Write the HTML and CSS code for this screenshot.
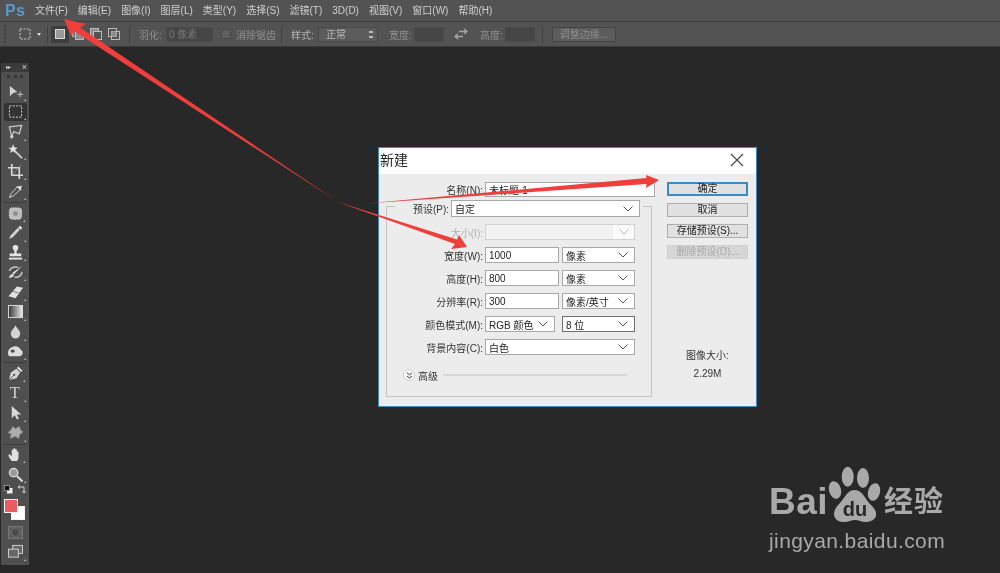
FILE: index.html
```html
<!DOCTYPE html>
<html lang="zh">
<head>
<meta charset="utf-8">
<title>Photoshop 新建</title>
<link rel="stylesheet" href="styles.css">
</head>
<body>
<svg class="defs" aria-hidden="true"><symbol id="chev" viewBox="0 0 12 8"><path d="M1.500 1.500 6 6l4.500-4.500" fill="none" stroke="currentColor" stroke-width="1"/></symbol></svg>
<div class="app">
  <header class="menubar">
    <span class="logo">Ps</span>
    <nav class="menu">
      <span>文件(F)</span><span>编辑(E)</span><span>图像(I)</span><span>图层(L)</span><span>类型(Y)</span><span>选择(S)</span><span>滤镜(T)</span><span>3D(D)</span><span>视图(V)</span><span>窗口(W)</span><span>帮助(H)</span>
    </nav>
  </header>
  <div class="options">
    <span class="grip"></span>
    <svg class="opt-marquee" width="12" height="12" viewBox="0 0 12 12"><rect x="1" y="1" width="10" height="10" fill="none" stroke="#cfcfcf" stroke-dasharray="2 1.400"/></svg>
    <span class="caret"></span>
    <span class="sep sep-a"></span>
    <span class="modes">
      <span class="mode on"><svg width="10" height="10" viewBox="0 0 10 10"><rect x=".5" y=".5" width="9" height="9" fill="#9a9a9a" stroke="#d8d8d8"/></svg></span>
      <span class="mode"><svg width="12" height="12" viewBox="0 0 12 12"><rect x=".5" y=".5" width="8" height="8" fill="#777" stroke="#aaa"/><rect x="3.500" y="3.500" width="8" height="8" fill="#8d8d8d" stroke="#bbb"/></svg></span>
      <span class="mode"><svg width="12" height="12" viewBox="0 0 12 12"><rect x=".5" y=".5" width="8" height="8" fill="#8d8d8d" stroke="#bbb"/><rect x="3.500" y="3.500" width="8" height="8" fill="#535353" stroke="#bbb"/></svg></span>
      <span class="mode"><svg width="12" height="12" viewBox="0 0 12 12"><rect x=".5" y=".5" width="8" height="8" fill="none" stroke="#bbb"/><rect x="3.500" y="3.500" width="8" height="8" fill="none" stroke="#bbb"/><rect x="3.500" y="3.500" width="5" height="5" fill="#8d8d8d"/></svg></span>
    </span>
    <span class="sep sep-b"></span>
    <span class="dim feather-label">羽化:</span>
    <span class="opt-input feather">0 像素</span>
    <span class="check"></span>
    <span class="dim aa-label">消除锯齿</span>
    <span class="sep sep-c"></span>
    <span class="lab style-label">样式:</span>
    <span class="opt-select">正常<i class="updown"></i></span>
    <span class="dim w-label">宽度:</span>
    <span class="opt-input size"></span>
    <svg class="swap" width="14" height="12" viewBox="0 0 14 12"><path d="M1 8.500h8M4 6 1 8.500 4 11M13 3.500H5M10 1l3 2.500L10 6" fill="none" stroke="#a5a5a5" stroke-width="1.300"/></svg>
    <span class="dim h-label">高度:</span>
    <span class="opt-input size"></span>
    <span class="sep sep-d"></span>
    <span class="opt-btn">调整边缘...</span>
  </div>
</div>

<aside class="toolbar">
  <div class="tb-head"><span>&#9656;&#9656;</span><span class="tb-x">×</span></div>
  <div class="tb-grip"></div>
  <div class="tool"><svg viewBox="0 0 16 16"><path d="M2 2v11l3.500-3.500L10 8.500z" fill="#d4d4d4"/><path d="M10 11h6M13 8v6" stroke="#c8c8c8" fill="none"/></svg></div>
  <div class="tool active"><svg viewBox="0 0 16 16"><rect x="1.500" y="2" width="13" height="12" fill="none" stroke="#d8d8d8" stroke-dasharray="2.200 1.400"/></svg></div>
  <div class="tool"><svg viewBox="0 0 16 16"><path d="M1.500 3l13-1.500-2.500 9-6-2.500-2 6z" fill="none" stroke="#cfcfcf" stroke-width="1.300"/><circle cx="4" cy="13.500" r="1.800" fill="#cfcfcf"/></svg></div>
  <div class="tool"><svg viewBox="0 0 16 16"><path d="M7 7l8 8" stroke="#d2d2d2" stroke-width="1.800"/><path d="M5.500 0l1.200 3.500L10 4 7.500 6.500l.5 3-2.800-1.800-3 1.800 1-3.200L.5 4H4z" fill="#e2e2e2"/></svg></div>
  <div class="tool"><svg viewBox="0 0 16 16"><path d="M4 0v12h12M0 4h12v12" fill="none" stroke="#d8d8d8" stroke-width="1.800"/><path d="M14 1 3 13" stroke="#aaa" stroke-width=".7"/></svg></div>
  <div class="tool"><svg viewBox="0 0 16 16"><path d="M10 3 3.500 10 1.500 14.500l4.500-2L13 6z" fill="none" stroke="#d8d8d8"/><path d="M9 2.500l4.500 4.500 1-1-1-1.500 1.500-1.500-1.500-1.500-1.500 1.500-1.500-1z" fill="#e8e8e8"/></svg></div>
  <div class="tool gap-top"><svg viewBox="0 0 16 16"><rect x="1.500" y="2" width="13" height="12" rx="3" fill="#bdbdbd" stroke="#e0e0e0" stroke-dasharray="1.800 1"/><circle cx="8" cy="8" r="2.500" fill="#8a8a8a"/></svg></div>
  <div class="tool"><svg viewBox="0 0 16 16"><path d="M10.500 3 3 11 1 15l4-2 7.500-8z" fill="#d4d4d4"/><path d="M11 2.500 12.800.8l2.400 2.400L13.500 5z" fill="#eee"/></svg></div>
  <div class="tool"><svg viewBox="0 0 16 16"><circle cx="8" cy="3" r="3" fill="#e4e4e4"/><path d="M6.800 5h2.400v4h5v3H1.800V9h5z" fill="#e4e4e4"/><rect x="1" y="13.500" width="14" height="2" fill="#e4e4e4"/></svg></div>
  <div class="tool"><svg viewBox="0 0 16 16"><path d="M15 1 6 10 4.500 8.500z" fill="#e8e8e8"/><path d="M5 9.500c-2 0-3.500 1.500-4 4 2.500.5 5-.5 5.500-3z" fill="#d8d8d8"/><path d="M1.500 6.500C3 2.500 7 1.500 11 2.500M15 7.500c-1 4-4 6-8 5.500" fill="none" stroke="#c8c8c8" stroke-width="1.500"/></svg></div>
  <div class="tool"><svg viewBox="0 0 16 16"><path d="M9.500 1.500 16 3 8 14 .5 12z" fill="#e0e0e0"/><path d="M5 6.500 11.500 8.500" stroke="#777"/></svg></div>
  <div class="tool"><svg viewBox="0 0 16 16"><defs><linearGradient id="gr"><stop offset="0" stop-color="#333"/><stop offset="1" stop-color="#eee"/></linearGradient></defs><rect x=".5" y="1.500" width="15" height="13" fill="url(#gr)" stroke="#ddd"/></svg></div>
  <div class="tool"><svg viewBox="0 0 16 16"><path d="M8 1c1 3.500 5 5.500 5 9.500a5 5 0 0 1-10 0C3 6.500 7 4.500 8 1z" fill="#d4d4d4"/></svg></div>
  <div class="tool"><svg viewBox="0 0 16 16"><path d="M0 10C0 5 4 2.500 8.500 2.500c3 0 4.500 3 7 5.500.5 2.500-.5 5-3.500 5H2.500C1 13 0 12 0 10z" fill="#dcdcdc"/><ellipse cx="5" cy="7.500" rx="2.300" ry="1.700" fill="#4e4e4e"/></svg></div>
  <div class="tool gap-top"><svg viewBox="0 0 16 16"><path d="M1 15 3 7l6-4 4 4-4 6z" fill="#d4d4d4"/><path d="M9.500 2l1.500-1.500 4.500 4.500-1.500 1.500z" fill="#e4e4e4"/><path d="M1 15l4.500-4.500" stroke="#4e4e4e"/><circle cx="6.500" cy="9.500" r="1.200" fill="#4e4e4e"/></svg></div>
  <div class="tool"><span class="tool-t">T</span></div>
  <div class="tool"><svg viewBox="0 0 16 16"><path d="M4 1v13l3.200-3.200 2.300 4.700 2.200-1-2.300-4.500H14z" fill="#d8d8d8"/></svg></div>
  <div class="tool"><svg viewBox="0 0 16 16"><path d="M5 1.500l3 2.500 4-2.500 1.500 4 2.500 2-3.500 2.500-1 4.500-4-2.500-5 2.500 1-5L0 8l3.500-3z" fill="#adadad" stroke="#8a8a8a"/></svg></div>
  <div class="tool gap-top"><svg viewBox="0 0 16 16"><path d="M4 15c-1-2-3.500-4-3.500-6.500 0-1.200 1.700-1.200 2.300 0L4 10V3.500c0-1.200 1.800-1.200 1.800 0V7V2c0-1.200 1.800-1.200 1.800 0v5V3c0-1.200 1.800-1.200 1.800 0v4.500V5.500c0-1.200 1.800-1.200 1.800 0V11c0 2-1 3-1.500 4z" fill="#e0e0e0"/></svg></div>
  <div class="tool"><svg viewBox="0 0 16 16"><circle cx="6" cy="6" r="4.500" fill="#9c9c9c" stroke="#dcdcdc" stroke-width="1.400"/><path d="M9.500 9.500 15.500 15.500" stroke="#dcdcdc" stroke-width="2.200"/></svg></div>
  <div class="mini">
    <svg width="9" height="9" viewBox="0 0 9 9"><rect x="3" y="3" width="5.500" height="5.500" fill="#eee"/><rect x=".5" y=".5" width="5" height="5" fill="#111" stroke="#bbb" stroke-width=".6"/></svg>
    <svg width="9" height="9" viewBox="0 0 9 9"><path d="M1 2h6v6M1 2l2-1.500M1 2l2 1.500M7 8 5.500 6M7 8l1.500-2" fill="none" stroke="#cfcfcf"/></svg>
  </div>
  <div class="swatches"><span class="sw-bg"></span><span class="sw-fg"></span></div>
  <div class="tool plain quick"><svg viewBox="0 0 16 16"><rect x=".5" y="1.500" width="15" height="13" fill="#626262" stroke="#777"/><circle cx="8" cy="8" r="3.500" fill="#4a4a4a"/><path d="M4 4.500 3 3.500M12 4.500l1-1M4 11.500l-1 1M12 11.500l1 1" stroke="#333"/></svg></div>
  <div class="tool"><svg viewBox="0 0 16 16"><rect x="5" y="1.500" width="10.500" height="8.500" fill="#666" stroke="#d4d4d4"/><rect x=".5" y="5.500" width="10.500" height="8.500" fill="#666" stroke="#d4d4d4"/></svg></div>
</aside>

<section class="dialog">
  <div class="dlg-title"><span>新建</span>
    <svg width="14" height="14" viewBox="0 0 14 14"><path d="M1 1l12 12M13 1 1 13" stroke="#444" stroke-width="1.100"/></svg>
  </div>
  <div class="dlg-body">
    <div class="dlg-form">
      <div class="row name-row"><label class="label">名称(N):</label><span class="field grow">未标题-1</span></div>
      <div class="group">
        <div class="row preset-row"><label class="label preset-label">预设(P):</label><span class="field select preset">自定<svg class="chev"><use href="#chev"/></svg></span></div>
        <div class="row"><label class="label off">大小(I):</label><span class="field select disabled w150"><i class="dis-thumb"><svg class="chev"><use href="#chev"/></svg></i></span></div>
        <div class="row"><label class="label">宽度(W):</label><span class="field num">1000</span><span class="field select unit">像素<svg class="chev"><use href="#chev"/></svg></span></div>
        <div class="row"><label class="label">高度(H):</label><span class="field num">800</span><span class="field select unit">像素<svg class="chev"><use href="#chev"/></svg></span></div>
        <div class="row"><label class="label">分辨率(R):</label><span class="field num">300</span><span class="field select unit">像素/英寸<svg class="chev"><use href="#chev"/></svg></span></div>
        <div class="row"><label class="label">颜色模式(M):</label><span class="field select mode-sel">RGB 颜色<svg class="chev"><use href="#chev"/></svg></span><span class="field select unit focus">8 位<svg class="chev"><use href="#chev"/></svg></span></div>
        <div class="row"><label class="label">背景内容(C):</label><span class="field select w150">白色<svg class="chev"><use href="#chev"/></svg></span></div>
        <div class="advanced"><span class="adv-btn"><svg width="7" height="7" viewBox="0 0 7 7"><path d="M1 .8l2.500 2 2.500-2M1 4l2.500 2L6 4" fill="none" stroke="#333"/></svg></span><span>高级</span><i></i></div>
      </div>
    </div>
    <div class="dlg-side">
      <button class="btn primary">确定</button>
      <button class="btn">取消</button>
      <button class="btn">存储预设(S)...</button>
      <button class="btn off">删除预设(D)...</button>
      <div class="info"><span>图像大小:</span><span>2.29M</span></div>
    </div>
  </div>
</section>

<div class="watermark">
  <div class="wm-top">
    <span class="wm-bai">Bai</span>
    <svg class="wm-paw" width="60" height="60" viewBox="0 0 60 60">
      <g fill="#a9a9a9">
        <ellipse cx="22.700" cy="11.700" rx="6" ry="10"/><ellipse cx="38" cy="13" rx="6" ry="10"/>
        <ellipse cx="10" cy="25" rx="6" ry="9" transform="rotate(-15 10 25)"/><ellipse cx="49" cy="27" rx="6" ry="9" transform="rotate(15 49 27)"/>
        <path d="M30 25C22 25 20 33 14 39 6 47 8 56 18 57c5 .5 8-2 12-2s7 2.500 12 2c10-1 12-9 5-16-7-6-9-16-17-16z"/>
      </g>
      <text x="30" y="51" class="wm-du">du</text>
    </svg>
    <span class="wm-cn">经验</span>
  </div>
  <div class="wm-url">jingyan.baidu.com</div>
</div>

<svg class="arrows" width="1000" height="573" viewBox="0 0 1000 573" aria-hidden="true">
  <g fill="#ee3f3d">
    <path d="M64 19 86 24 80 27.500 336 200.500 74 31 71 36z"/>
    <path d="M659 180 646 175 646.500 178 366 203.500 646.500 184 646 188z"/>
    <path d="M467 247 459 235 457 239.500 336 201.500 455 244 451 249z"/>
  </g>
</svg>
</body>
</html>
```
FILE: styles.css
```css
* { box-sizing: border-box; }
html, body { margin: 0; height: 573px; overflow: hidden; }
body {
  position: relative;
  background: #282828;
  font-family: "Liberation Sans", "Noto Sans CJK SC", sans-serif;
  font-size: 10px;
}
.defs { position: absolute; width: 0; height: 0; }
.app { filter: blur(.3px); }

.menubar {
  display: flex;
  align-items: center;
  height: 22px;
  background: #535353;
  border-bottom: 1px solid #3c3c3c;
}
.logo { width: 35px; padding-left: 5px; font-size: 16px; font-weight: 700; color: #5a97cc; letter-spacing: .3px; }
.menu { display: flex; align-items: baseline; gap: 10px; color: #d0d0d0; font-size: 10px; line-height: 14px; white-space: nowrap; }

.options {
  display: flex;
  align-items: center;
  height: 25px;
  padding-left: 4px;
  background: #535353;
  border-bottom: 1px solid #3a3a3a;
  color: #a6a6a6;
}
.grip { width: 3px; height: 18px; border-left: 2px dotted #3c3c3c; }
.opt-marquee { margin-left: 12px; }
.caret { margin-left: 6px; border: 2.500px solid transparent; border-top: 3px solid #ddd; border-bottom: 0; }
.sep { width: 1px; height: 17px; background: #3f3f3f; }
.sep-a { margin-left: 6px; }
.modes { display: flex; align-items: center; margin-left: 3px; }
.mode { display: flex; align-items: center; justify-content: center; width: 18px; height: 17px; }
.mode.on { background: #3e3e3e; border-radius: 1px; }
.sep-b { margin-left: 6px; }
.dim { color: #8f8f8f; }
.lab { color: #b5b5b5; }
.feather-label { margin-left: 9px; width: 27px; }
.opt-input { height: 15px; background: #464646; border: 1px solid #4a4a4a; color: #777; line-height: 13px; padding-left: 2px; }
.feather { width: 47px; }
.check { margin-left: 8px; width: 10px; height: 10px; background: #5f5f5f; border: 1px solid #474747; border-radius: 1px; }
.aa-label { margin-left: 5px; width: 40px; }
.sep-c { margin-left: 5px; }
.style-label { margin-left: 9px; width: 27px; }
.opt-select { position: relative; width: 60px; height: 15px; padding-left: 7px; line-height: 14px; background: #5c5c5c; border: 1px solid #484848; border-radius: 2px; color: #b8b8b8; }
.updown { position: absolute; right: 4px; top: 3px; width: 4px; height: 7px; border-top: 2px dotted #bbb; border-bottom: 2px dotted #bbb; }
.w-label { margin-left: 11px; width: 25px; }
.size { width: 30px; }
.swap { margin-left: 10px; }
.h-label { margin-left: 12px; width: 25px; }
.sep-d { margin-left: 7px; }
.opt-btn { margin-left: 9px; width: 64px; height: 15px; text-align: center; line-height: 13px; background: #5c5c5c; border: 1px solid #444; border-radius: 2px; color: #8f8f8f; }

.toolbar {
  position: absolute;
  left: 1px;
  top: 63px;
  width: 28px;
  height: 502px;
  display: flex;
  flex-direction: column;
  align-items: center;
  background: #4f4f4f;
  filter: blur(.3px);
}
.tb-head { display: flex; justify-content: space-between; align-items: center; width: 100%; height: 9px; padding: 0 3px 0 5px; background: #3b3b3b; color: #cfcfcf; font-size: 6px; line-height: 9px; letter-spacing: -1px; }
.tb-x { font-size: 9px; }
.tb-grip { width: 16px; height: 3px; margin: 3px 0 4px; border-top: 3px dotted #383838; }
.tool { position: relative; display: flex; align-items: center; justify-content: center; flex: none; width: 23px; height: 19.800px; }
.tool svg { width: 15px; height: 15px; }
.tool::after { content: ""; position: absolute; right: 1px; bottom: 1px; border: 1.500px solid transparent; border-right-color: #c8c8c8; border-bottom-color: #c8c8c8; }
.tool.plain::after { display: none; }
.tool.active { background: #333; border-radius: 2px; height: 18px; margin: 1px 0; }
.gap-top { margin-top: 1px; padding-top: 1px; border-top: 1px solid #3c3c3c; height: 20.800px; width: 22px; }
.tool-t { font-family: "Liberation Serif", serif; font-size: 16px; color: #d6d6d6; }
.mini { display: flex; justify-content: space-between; flex: none; width: 22px; height: 10px; margin-top: 1px; }
.swatches { position: relative; flex: none; width: 22px; height: 21px; margin-top: 4px; }
.sw-fg, .sw-bg { position: absolute; width: 14px; height: 14px; border: 1px solid #f2f2f2; }
.sw-fg { left: 0; top: 0; background: #e85c60; }
.sw-bg { left: 7px; top: 7px; background: #fff; }
.quick { margin-top: 2px; }

.dialog {
  position: absolute;
  left: 378px;
  top: 147px;
  width: 379px;
  height: 260px;
  background: #ececec;
  border: 1px solid #3b8ac4;
  color: #222;
  filter: blur(.25px);
}
.dlg-title { display: flex; justify-content: space-between; align-items: center; height: 26px; padding: 0 12px 3px 1px; background: #fff; font-size: 14px; color: #222; }
.dlg-title span { margin-top: -2px; }
.dlg-body { display: flex; padding: 8px 0 0 7px; }
.dlg-form { width: 269px; }
.row { display: flex; align-items: center; gap: 2px; height: 16px; }
.name-row { height: 15px; margin-bottom: 9px; }
.label { flex: none; width: 96px; text-align: right; white-space: nowrap; color: #333; }
.name-row .label { width: 97px; }
.label.off { color: #b0b0b0; }
.field { display: flex; align-items: center; height: 100%; padding-left: 3px; background: #fff; border: 1px solid #a8a8a8; color: #222; white-space: nowrap; }
.grow { flex: 1; }
.group { display: flex; flex-direction: column; gap: 7px; width: 266px; height: 191px; border: 1px solid #c4c4c4; }
.preset-row { height: 17px; margin-top: -7px; }
.preset-label { margin-left: 8px; width: 54px; background: #ececec; }
.preset { width: 189px; box-shadow: 0 0 0 3px #ececec; }
.select { position: relative; }
.chev { position: absolute; right: 5px; top: 50%; width: 12px; height: 8px; margin-top: -4px; color: #555; }
.w150 { width: 150px; }
.disabled { background: #f2f2f2; border-color: #d2d2d2; }
.dis-thumb { position: absolute; right: 0; top: 0; bottom: 0; width: 21px; background: #fbfbfb; }
.dis-thumb .chev { color: #b5b5b5; right: 4px; }
.num { width: 74px; }
.unit { width: 73px; margin-left: 1px; }
.mode-sel { width: 70px; margin-right: 5px; }
.focus { border-color: #6f6f6f; margin-left: 0; }
.advanced { display: flex; align-items: center; gap: 3px; height: 14px; margin: 6px 24px 0 16px; color: #333; }
.adv-btn { display: flex; align-items: center; justify-content: center; width: 12px; height: 12px; border-radius: 50%; background: #fafafa; border: 1px solid #cfcfcf; }
.advanced i { flex: 1; height: 2px; margin-left: 2px; background: #d8d8d8; }

.dlg-side { display: flex; flex-direction: column; gap: 7px; width: 81px; margin-left: 12px; }
.btn { width: 81px; height: 14px; padding: 0; background: #e1e1e1; border: 1px solid #adadad; font: inherit; line-height: 12px; color: #222; }
.btn.primary { border-color: #3b8ac4; border-width: 2px; line-height: 10px; }
.btn.off { color: #a8a8a8; background: #d6d6d6; border-color: #d0d0d0; }
.info { display: flex; flex-direction: column; align-items: center; gap: 6px; margin-top: 81px; color: #333; }

.watermark { position: absolute; left: 769px; top: 465px; width: 178px; color: #a9a9a9; filter: blur(.3px); }
.wm-top { display: flex; align-items: flex-end; height: 60px; }
.wm-bai { width: 56px; font-size: 37px; font-weight: 700; line-height: 46px; letter-spacing: .5px; }
.wm-paw { flex: none; }
.wm-du { font-size: 20px; font-weight: 700; fill: #282828; text-anchor: middle; font-family: "Liberation Sans", sans-serif; }
.wm-cn { margin-left: -1px; font-size: 29px; font-weight: 700; line-height: 46px; white-space: nowrap; letter-spacing: 1px; }
.wm-url { margin-top: 3px; font-size: 21px; line-height: 26px; letter-spacing: .4px; white-space: nowrap; font-family: "Liberation Sans", sans-serif; }

.arrows { position: absolute; left: 0; top: 0; pointer-events: none; filter: blur(.3px); }
```
